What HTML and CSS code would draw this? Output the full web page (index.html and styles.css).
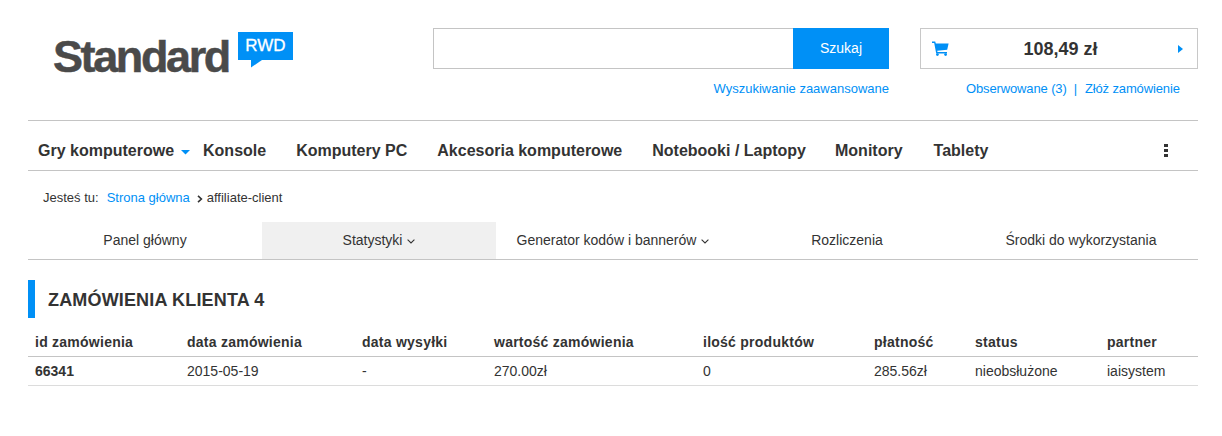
FILE: index.html
```html
<!DOCTYPE html>
<html lang="pl">
<head>
<meta charset="utf-8">
<title>Standard RWD</title>
<link rel="stylesheet" href="styles.css">
</head>
<body>
<div class="page">
  <header class="top">
    <a class="logo" href="#">
      <span class="logo-word">Standard</span>
      <span class="logo-badge">RWD<svg class="logo-tail" width="14" height="8" viewBox="0 0 14 8"><path d="M3 0H14L3 7.5z" fill="#0090f6"/></svg></span>
    </a>
    <div class="search">
      <div class="search-row">
        <div class="search-input"></div>
        <div class="search-btn">Szukaj</div>
      </div>
      <a class="link adv" href="#">Wyszukiwanie zaawansowane</a>
    </div>
    <div class="cart">
      <div class="cart-box">
        <svg class="cart-icon" width="17" height="15" viewBox="0 0 17 15"><path d="M0 0.5H3.2L3.8 2.5H16.6L15.2 8.8L5.2 9.8L5.5 11H15V12.4H4.2L2.2 1.9H0z" fill="#0090f6"/><circle cx="5.4" cy="13.6" r="1.4" fill="#0090f6"/><circle cx="13.6" cy="13.6" r="1.4" fill="#0090f6"/></svg>
        <span class="cart-sum">108,49 zł</span>
        <svg class="cart-arrow" width="5" height="8" viewBox="0 0 5 8"><path d="M0 0L5 4L0 8z" fill="#0090f6"/></svg>
      </div>
      <div class="cart-links"><a class="link" href="#">Obserwowane (3)</a><span class="sep">|</span><a class="link" href="#">Złóż zamówienie</a></div>
    </div>
  </header>

  <nav class="menu">
    <a class="menu-item first" href="#">Gry komputerowe<svg class="menu-caret" width="9" height="5" viewBox="0 0 9 5"><path d="M0 0H9L4.5 4.5z" fill="#0090f6"/></svg></a>
    <a class="menu-item" href="#">Konsole</a>
    <a class="menu-item" href="#">Komputery PC</a>
    <a class="menu-item" href="#">Akcesoria komputerowe</a>
    <a class="menu-item note" href="#">Notebooki / Laptopy</a>
    <a class="menu-item mon" href="#">Monitory</a>
    <a class="menu-item" href="#">Tablety</a>
    <span class="menu-more"><i></i><i></i><i></i></span>
  </nav>

  <div class="crumbs">
    <span class="crumbs-label">Jesteś tu:</span>
    <a class="link" href="#">Strona główna</a>
    <svg class="crumbs-sep" width="6" height="8" viewBox="0 0 6 8"><path d="M1 0.8L4.4 4L1 7.2" fill="none" stroke="#333" stroke-width="1.6"/></svg>
    <span>affiliate-client</span>
  </div>

  <div class="tabs">
    <a class="tab" href="#">Panel główny</a>
    <a class="tab active" href="#">Statystyki<svg class="chev" width="8" height="5" viewBox="0 0 8 5"><path d="M0.6 0.7L4 4L7.4 0.7" fill="none" stroke="#333" stroke-width="1.1"/></svg></a>
    <a class="tab" href="#">Generator kodów i bannerów<svg class="chev" width="8" height="5" viewBox="0 0 8 5"><path d="M0.6 0.7L4 4L7.4 0.7" fill="none" stroke="#333" stroke-width="1.1"/></svg></a>
    <a class="tab" href="#">Rozliczenia</a>
    <a class="tab" href="#">Środki do wykorzystania</a>
  </div>

  <h1 class="title">Zamówienia klienta 4</h1>

  <table class="orders">
    <colgroup>
      <col class="c1"><col class="c2"><col class="c3"><col class="c4"><col class="c5"><col class="c6"><col class="c7"><col class="c8">
    </colgroup>
    <thead>
      <tr><th>id zamówienia</th><th>data zamówienia</th><th>data wysyłki</th><th>wartość zamówienia</th><th>ilość produktów</th><th>płatność</th><th>status</th><th>partner</th></tr>
    </thead>
    <tbody>
      <tr><td class="strong">66341</td><td>2015-05-19</td><td>-</td><td>270.00zł</td><td>0</td><td>285.56zł</td><td>nieobsłużone</td><td>iaisystem</td></tr>
    </tbody>
  </table>
</div>
</body>
</html>
```
FILE: styles.css
```css
* { box-sizing: border-box; }
html, body { margin: 0; background: #fff; }
body { font-family: "Liberation Sans", Arial, sans-serif; color: #333; font-size: 13px; height: 436px; overflow: hidden; }
a { text-decoration: none; color: inherit; }
.page { width: 1170px; margin-left: 28px; }
.link { color: #0090f6; }

.top { display: flex; align-items: flex-start; border-bottom: 1px solid #c4c4c4; height: 121px; }
.logo { width: 405px; padding: 4px 0 0 25px; display: flex; align-items: flex-start; margin-top: 28px; }
.logo-word { font-size: 45px; line-height: 50px; font-weight: 700; letter-spacing: -2.4px; color: #4a4a4a; -webkit-text-stroke: 0.5px #4a4a4a; }
.logo-badge { position: relative; margin: 0 0 0 9px; width: 55px; height: 28px; background: #0090f6; color: #fff; font-size: 17px; line-height: 28px; text-align: center; -webkit-text-stroke: 0.3px #fff; }
.logo-tail { position: absolute; left: 10px; top: 28px; }

.search { width: 456px; margin-top: 28px; display: flex; flex-direction: column; align-items: flex-end; }
.search-row { display: flex; width: 100%; height: 41px; }
.search-input { flex: 1; border: 1px solid #c4c4c4; border-right: 0; }
.search-btn { width: 96px; background: #0090f6; color: #fff; font-size: 14px; line-height: 41px; text-align: center; }
.adv { margin-top: 13px; line-height: 14px; }

.cart { width: 278px; margin-left: 31px; margin-top: 28px; display: flex; flex-direction: column; }
.cart-box { height: 41px; border: 1px solid #c8c8c8; display: flex; align-items: center; padding: 0 14px 0 11px; }
.cart-sum { flex: 1; text-align: center; font-size: 18px; font-weight: 700; padding: 2px 6px 0 0; }
.cart-links { margin-top: 13px; line-height: 14px; padding-left: 46px; letter-spacing: -0.13px; }
.sep { color: #0090f6; margin: 0 8px 0 7px; }

.menu { height: 50px; border-bottom: 1px solid #c4c4c4; display: flex; align-items: center; padding: 10px 0 0 10px; font-size: 16px; font-weight: 700; }
.menu-item { white-space: nowrap; margin-right: 30px; }
.menu-item.first { margin-right: 13px; }
.menu-caret { margin-left: 7px; vertical-align: 1px; }
.menu-item.note { margin-right: 29px; }
.menu-item.mon { margin-right: 31px; }
.menu-more { margin-left: auto; margin-right: 30px; display: flex; flex-direction: column; gap: 2px; }
.menu-more i { display: block; width: 4px; height: 3px; background: #333; }

.crumbs { height: 51px; padding: 20px 0 0 15px; line-height: 14px; display: flex; align-items: flex-start; }
.crumbs-label { margin-right: 8px; }
.crumbs-sep { margin: 4px 4px 0 7px; }

.tabs { display: grid; grid-template-columns: repeat(5, 1fr); height: 38px; border-bottom: 1px solid #c4c4c4; }
.tab { font-size: 14px; line-height: 37px; text-align: center; height: 37px; }
.tab.active { background: #f0f0f0; }
.chev { margin-left: 5px; vertical-align: 1px; }

.title { margin: 20px 0 0; height: 38px; border-left: 7px solid #0090f6; padding-left: 13px; font-size: 18px; line-height: 40px; font-weight: 700; letter-spacing: 0.16px; text-transform: uppercase; }

.orders { width: 100%; margin-top: 8px; border-collapse: collapse; table-layout: fixed; font-size: 14px; }
.orders th { text-align: left; font-weight: 700; padding: 2px 7px 0; height: 30px; border-bottom: 1px solid #c4c4c4; letter-spacing: 0.25px; }
.orders td { padding: 0 7px; height: 29px; border-bottom: 1px solid #dcdcdc; }
.orders td.strong { font-weight: 700; }
.c1 { width: 152px; }
.c2 { width: 175px; }
.c3 { width: 132px; }
.c4 { width: 209px; }
.c5 { width: 171px; }
.c6 { width: 101px; }
.c7 { width: 132px; }
.c8 { width: 98px; }
```
